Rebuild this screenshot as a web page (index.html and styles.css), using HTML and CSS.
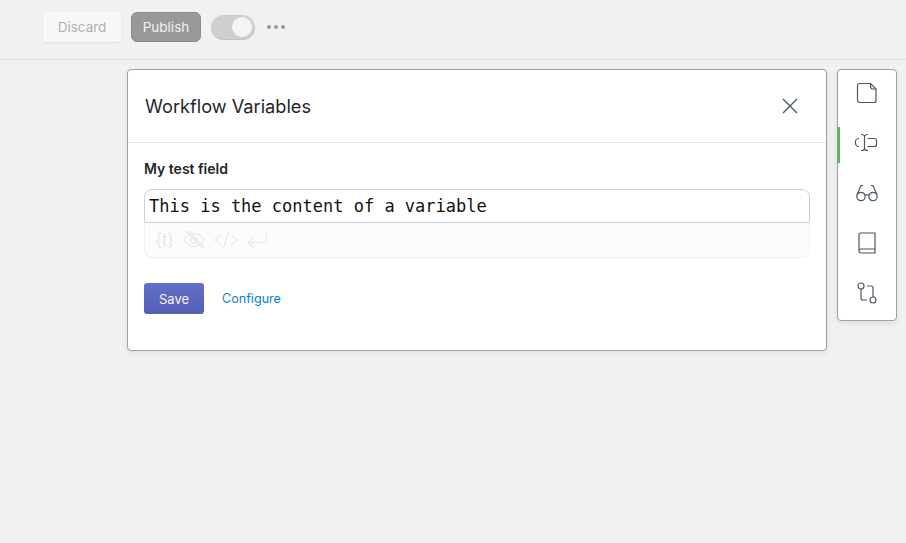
FILE: index.html
```html
<!DOCTYPE html>
<html lang="en">
<head>
    <meta charset="UTF-8">
    <meta name="viewport" content="width=device-width, initial-scale=1.0">
    <title>Workflow Variables</title>
    <link rel="stylesheet" href="styles.css">
</head>
<body>
    <header class="topbar">
        <button class="btn-discard">Discard</button>
        <button class="btn-publish">Publish</button>
        <div class="toggle"><span class="toggle-knob"></span></div>
        <div class="dots"><span></span><span></span><span></span></div>
    </header>

    <main class="workspace">
        <section class="panel">
            <div class="panel-head">
                <h1 class="panel-title">Workflow Variables</h1>
                <svg class="close-icon" width="16" height="16" viewBox="0 0 16 16" fill="none" stroke="#4a5568" stroke-width="1.4">
                    <path d="M1 1l14 14M15 1L1 15"/>
                </svg>
            </div>
            <div class="panel-body">
                <div class="field-label">My test field</div>
                <div class="field">
                    <div class="field-input">This is the content of a variable</div>
                    <div class="field-tools">
                        <span class="tool-var">{t}</span>
                        <svg width="22" height="20" viewBox="0 0 22 20" fill="none" stroke="#e8e8e8" stroke-width="1.2">
                            <path d="M1 10c3-4.500 6-6.500 10-6.500s7 2 10 6.500c-3 4.500-6 6.500-10 6.500s-7-2-10-6.500z"/>
                            <circle cx="11" cy="10" r="3.200"/>
                            <path d="M3 1l16 17M6 1l15 16"/>
                        </svg>
                        <svg width="24" height="20" viewBox="0 0 24 20" fill="none" stroke="#e8e8e8" stroke-width="1.2">
                            <path d="M7 5l-6 5 6 5M17 5l6 5-6 5M14.500 2l-5 16"/>
                        </svg>
                        <svg width="20" height="20" viewBox="0 0 20 20" fill="none" stroke="#e8e8e8" stroke-width="1.2">
                            <path d="M19.500 3v8a1.500 1.500 0 0 1-1.500 1.500H1M7 7L1 12.500 7 18"/>
                        </svg>
                    </div>
                </div>
                <div class="actions">
                    <button class="btn-save">Save</button>
                    <a class="link-configure" href="#">Configure</a>
                </div>
            </div>
        </section>

        <nav class="rail">
            <div class="rail-item">
                <svg width="22" height="22" viewBox="0 0 22 22" fill="none" stroke="#4a5568" stroke-width="1.2">
                    <path d="M3.500 1.500h11l5.500 5.500v11.500a2 2 0 0 1-2 2H3.500a2 2 0 0 1-2-2V3.500a2 2 0 0 1 2-2z"/>
                    <path d="M14.500 1.500v3a2.500 2.500 0 0 0 2.500 2.500h3"/>
                </svg>
            </div>
            <div class="rail-item rail-active">
                <svg width="24" height="22" viewBox="0 0 24 22" fill="none" stroke="#4a5568" stroke-width="1.2">
                    <path d="M5 6.500c-2 0-3.500 1.500-3.500 3v2c0 1.500 1.500 3 3.500 3M13.500 6.500h7a2 2 0 0 1 2 2v4a2 2 0 0 1-2 2h-7"/>
                    <path d="M7 2.500c2 0 3.500.5 3.500 2v12c0 1.500-1.500 2-3.500 2M14 2.500c-2 0-3.500.5-3.500 2v12c0 1.500 1.500 2 3.500 2"/>
                </svg>
            </div>
            <div class="rail-item">
                <svg width="24" height="22" viewBox="0 0 24 22" fill="none" stroke="#4a5568" stroke-width="1.2">
                    <circle cx="6" cy="14.500" r="4.200"/>
                    <circle cx="18" cy="14.500" r="4.200"/>
                    <path d="M10 13.500c1-1 3-1 4 0M2 13l4-9.500h2M22 13l-4-9.500h-2"/>
                </svg>
            </div>
            <div class="rail-item">
                <svg width="22" height="24" viewBox="0 0 22 24" fill="none" stroke="#4a5568" stroke-width="1.2">
                    <path d="M3 20V3.500a1.500 1.500 0 0 1 1.500-1.500H19v20H5a2 2 0 0 1-2-2zm0 0a2 2 0 0 1 2-2h14"/>
                </svg>
            </div>
            <div class="rail-item">
                <svg width="24" height="24" viewBox="0 0 24 24" fill="none" stroke="#4a5568" stroke-width="1.2">
                    <circle cx="6" cy="5" r="3"/>
                    <circle cx="18" cy="19" r="3"/>
                    <path d="M6 8v9a2 2 0 0 0 2 2h4M12 5h4a2 2 0 0 1 2 2v9"/>
                </svg>
            </div>
        </nav>
    </main>
</body>
</html>
```

FILE: styles.css
```css
html, body {
    height: 100%;
}

body {
    margin: 0;
    background-color: #f1f1f1;
    font-family: Inter, "Liberation Sans", sans-serif;
    color: #22262b;
    overflow: hidden;
}

button {
    font-family: inherit;
    font-size: 13.5px;
    cursor: pointer;
}

.topbar {
    display: flex;
    align-items: center;
    height: 60px;
    padding: 0 0 5px 43px;
    box-sizing: border-box;
    border-bottom: 1px solid #e2e2e2;
}

.btn-discard {
    width: 78px;
    height: 30px;
    border: 0;
    border-radius: 4px;
    background-color: #f8f8f8;
    color: #b0b0b0;
    box-shadow: 0 1px 2px rgba(0, 0, 0, 0.08);
}

.btn-publish {
    width: 70px;
    height: 30px;
    margin-left: 10px;
    border: 1px solid #8b8b8b;
    border-radius: 6px;
    background-color: #999;
    color: #f1f1f1;
}

.toggle {
    display: flex;
    align-items: center;
    justify-content: flex-end;
    width: 44px;
    height: 25px;
    margin-left: 10px;
    padding-right: 3px;
    box-sizing: border-box;
    border-radius: 13px;
    background-color: #cfcfcf;
    box-shadow: inset 0 -1px 0 #c2c2c2;
}

.toggle-knob {
    width: 20px;
    height: 20px;
    border-radius: 50%;
    background-color: #f4f4f4;
}

.dots {
    display: flex;
    gap: 3px;
    margin-left: 12px;
}

.dots span {
    width: 4px;
    height: 4px;
    border-radius: 50%;
    background-color: #9a9a9a;
}

.workspace {
    display: flex;
    align-items: flex-start;
    gap: 10px;
    padding: 9px 0 0 127px;
}

.panel {
    width: 700px;
    height: 282px;
    box-sizing: border-box;
    border: 1px solid #95a3b3;
    border-radius: 4px;
    background-color: #fff;
    box-shadow: 0 2px 6px rgba(0, 0, 0, 0.08);
}

.panel-head {
    display: flex;
    align-items: center;
    justify-content: space-between;
    height: 72px;
    padding: 0 28px 0 17px;
    border-bottom: 1px solid #e3e3e8;
}

.panel-title {
    margin: 0;
    font-size: 18.2px;
    font-weight: 400;
}

.panel-body {
    padding: 18px 16px 0;
}

.field-label {
    font-size: 14px;
    font-weight: 600;
    line-height: 16px;
}

.field {
    margin-top: 12px;
    border-radius: 8px;
}

.field-input {
    height: 32px;
    padding-left: 4px;
    border: 1px solid #c5d0dc;
    border-radius: 8px 8px 0 0;
    font-family: "DejaVu Sans Mono", monospace;
    font-size: 17px;
    line-height: 32px;
    color: #111;
}

.field-tools {
    display: flex;
    align-items: center;
    gap: 9px;
    height: 34px;
    padding-left: 10px;
    border: 1px solid #f1f1f3;
    border-top: 0;
    border-radius: 0 0 8px 8px;
    background-color: #fcfcfc;
}

.tool-var {
    font-size: 17px;
    font-weight: 300;
    color: #e2e2e2;
}

.actions {
    display: flex;
    align-items: center;
    gap: 18px;
    margin-top: 25px;
}

.btn-save {
    width: 60px;
    height: 31px;
    border: 0;
    border-radius: 3px;
    font-size: 13px;
    color: #f2f3fb;
    background: linear-gradient(#636fc6, #5460b4);
}

.link-configure {
    font-size: 12.6px;
    color: #0a7fd1;
    text-decoration: none;
}

.rail {
    display: flex;
    flex-direction: column;
    gap: 4px;
    width: 60px;
    height: 252px;
    box-sizing: border-box;
    border: 1px solid #95a3b3;
    border-radius: 4px;
    background-color: #fff;
    box-shadow: 0 2px 6px rgba(0, 0, 0, 0.08);
}

.rail-item {
    display: flex;
    align-items: center;
    justify-content: center;
    height: 46px;
}

.rail-active {
    position: relative;
}

.rail-active svg {
    margin-left: -2px;
}

.rail-active::before {
    content: "";
    position: absolute;
    left: -1px;
    top: 7px;
    width: 3px;
    height: 36px;
    background-color: #5cb865;
}
```
